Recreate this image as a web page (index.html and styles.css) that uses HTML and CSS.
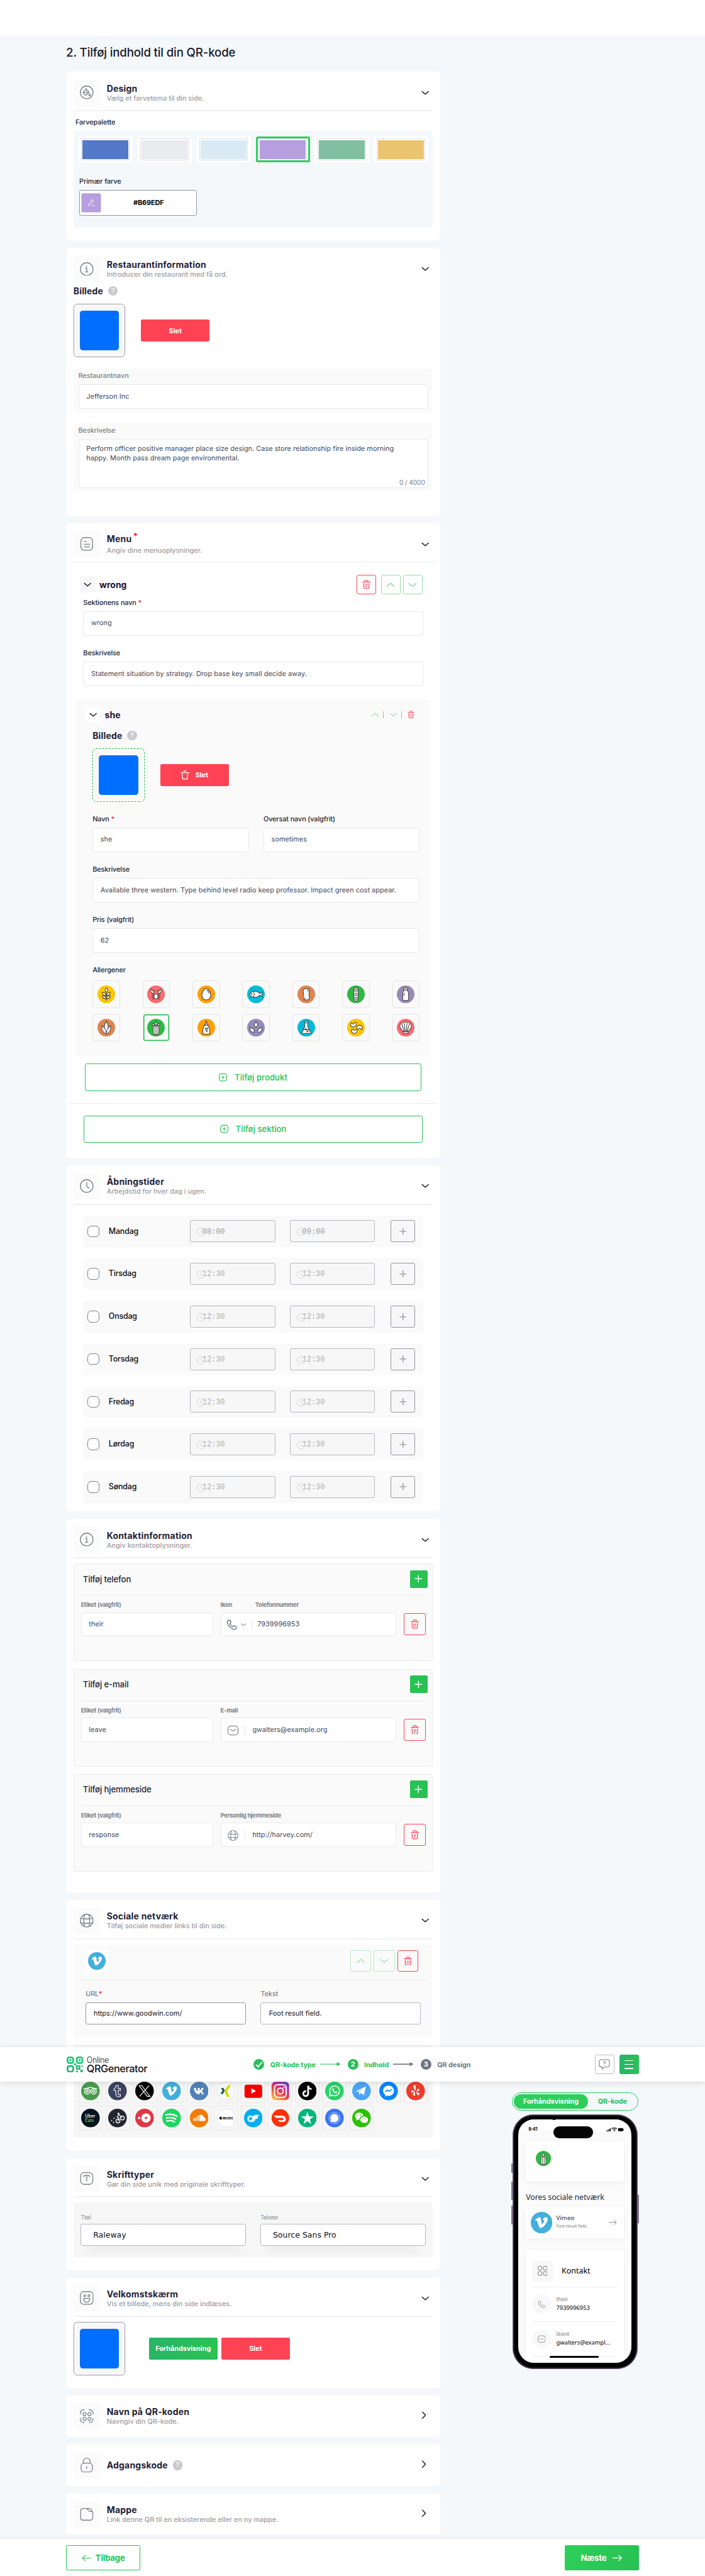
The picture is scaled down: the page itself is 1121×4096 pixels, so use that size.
FILE: index.html
```html
<!DOCTYPE html>
<html lang="da">
<head>
<meta charset="utf-8">
<title>Online QR Generator</title>
<link rel="stylesheet" href="styles.css">
</head>
<body>
<svg class="sprite" aria-hidden="true">
  <symbol id="chev-down" viewBox="0 0 16 8"><path d="M1 1l7 6 7-6"/></symbol>
  <symbol id="chev-up" viewBox="0 0 16 8"><path d="M1 7l7-6 7 6"/></symbol>
  <symbol id="chev-right" viewBox="0 0 10 16"><path d="M1.500 1l7 7-7 7"/></symbol>
  <symbol id="plus" viewBox="0 0 16 16"><path d="M8 .5v15M.5 8h15"/></symbol>
  <symbol id="trash" viewBox="0 0 18 20"><path d="M1 5h16M5.500 4.500c0-4 1-3.500 3.500-3.500s3.500-.500 3.500 3.500M3 8l.6 8.500c.2 2 .8 2.500 2.400 2.500h6c1.600 0 2.200-.5 2.400-2.500L15 8M6.500 10.500h5M7.500 14.500h3"/></symbol>
  <symbol id="bin" viewBox="0 0 18 20"><path d="M0 5h18M6 1h6M3 6l1 12.500h10L15 6"/></symbol>
  <symbol id="i-info" viewBox="0 0 28 28"><circle cx="14" cy="14" r="13"/><path d="M11.500 12H14v7.500M11.500 19.700h5M13.800 8v1.600"/></symbol>
  <symbol id="i-clock" viewBox="0 0 28 28"><circle cx="14" cy="14" r="13"/><path d="M14 7v8l5 3.500"/></symbol>
  <symbol id="i-globe" viewBox="0 0 28 28"><circle cx="14" cy="14" r="13"/><path d="M9.500 2c-2 8-2 16 0 24M18.500 2c2 8 2 16 0 24M2 9.500c8 1.500 16 1.500 24 0M2 18.500c8 1.500 16 1.500 24 0"/></symbol>
  <symbol id="i-paint" viewBox="0 0 28 28"><circle cx="14" cy="14" r="13"/><path d="M12.500 7l6 6.500-5 5.500c-1 1-2 1-3 0l-3-3c-1-1-1-2 0-3l5-5.500zM12.500 5.500V9M7 14h11.500M20 16.500c-2 3-1.700 4.500 0 4.500s2-1.500 0-4.500z"/></symbol>
  <symbol id="i-doc" viewBox="0 0 28 28"><rect x="2" y="1" width="24" height="26" rx="7"/><path d="M9 8.500h4M9 14.500h11M9 20h11"/></symbol>
  <symbol id="i-type" viewBox="0 0 28 28"><rect x="1.500" y="2" width="25" height="24" rx="7"/><path d="M8 10.500c0-2 .5-2.500 2.500-2.500h7c2 0 2.500.5 2.500 2.500M14 8v11.500"/></symbol>
  <symbol id="i-smile" viewBox="0 0 28 28"><rect x="1" y="1" width="26" height="26" rx="7"/><circle cx="10" cy="9.500" r="2"/><circle cx="18.500" cy="9.500" r="2"/><path d="M8 15h12c1 0 0 8-6 8s-7-8-6-8z"/></symbol>
  <symbol id="i-qr" viewBox="0 0 28 28"><path d="M1 9.500C1 3 3 1 9 1M19 1c6 0 8 2 8 8.500M1 18.500C1 25 3 27 9 27M19 27c6 0 8-2 8-8.500"/><rect x="6.500" y="6.500" width="6" height="6" rx="1.500"/><rect x="16.500" y="6.500" width="6" height="6" rx="1.500"/><rect x="6.500" y="16.500" width="6" height="6" rx="1.500"/><rect x="16.500" y="16.500" width="6" height="6" rx="1.500"/></symbol>
  <symbol id="i-lock" viewBox="0 0 28 30"><rect x="2.500" y="11" width="23" height="18" rx="6"/><path d="M7 11V8c0-9.500 14-9.500 14 0v3M14 18v4"/></symbol>
  <symbol id="i-folder" viewBox="0 0 28 28"><path d="M1.500 8c0-4.500 1.500-6 5.500-6h7l4 4.500c1 1 1.500 1.500 3 1.500h3c2 .5 2.500 2 2.500 4v8c0 4.500-1.500 6-5.500 6H7c-4 0-5.500-1.500-5.500-6zM12 2h7c4 0 5.500 1 5.800 6"/></symbol>
  <symbol id="i-phone" viewBox="0 0 24 24"><path d="M2 5c0 8 9 17 17 17 2 0 4-3 3.500-4.500-.8-1.500-3.500-3.500-5-3.300-1.500.3-2 2-3.300 1.800C12 15.500 8.500 12 8 10c-.2-1.400 1.500-2 1.800-3.300C10 5 8 2.300 6.500 1.500 5 1 2 3 2 5z"/></symbol>
  <symbol id="i-mail" viewBox="0 0 24 22"><rect x="1" y="1" width="22" height="20" rx="6"/><path d="M6 8c3 2.500 4.500 4 6 4s3-1.500 6-4"/></symbol>
  <symbol id="addbox" viewBox="0 0 18 18"><rect x="1" y="1" width="16" height="16" rx="5"/><path d="M9 5.500v7M5.500 9h7"/></symbol>
  <symbol id="arrow-r" viewBox="0 0 20 14"><path d="M0 7h18M12 1l6.500 6-6.500 6"/></symbol>
  <symbol id="arrow-l" viewBox="0 0 20 14"><path d="M20 7H2M8 1L1.500 7 8 13"/></symbol>
  <symbol id="vimeo" viewBox="0 0 36 36"><circle cx="18" cy="18" r="18" fill="#43afdc"/><path fill="#fff" d="M7 13.500l1.200 1.500c1.200-.8 2-.9 2.600.8.900 2.700 1.500 5.500 2.500 8.200.9 2.300 2.200 4 5 2.600 3.500-1.800 9.800-9 10-14.300.2-3.300-3.600-4.200-6-2.300-1.300 1-2.200 2.400-2.500 4 2.300-1 3.400.3 2.400 2.400-.6 1.300-1.600 3-2.400 3.600-1.100.8-1.600-1-1.800-2-.5-2.300-.7-4.600-1.300-6.800-.6-2.200-2-2.800-4-1.800-2 1-3.700 2.700-5.700 4.100z"/></symbol>
  <symbol id="celery" viewBox="0 0 36 36"><circle cx="18" cy="18" r="18" fill="#2fb843"/><g class="al"><path d="M14.500 15c-2.500-.5-4.500-3-4.500-5.500 3 0 5 1.500 5.500 5zM21.500 15c2.500-.5 4.500-3 4.500-5.500-3 0-5 1.500-5.500 5z"/><path d="M18 5c3 3.500 2.500 6.500 0 9.500-2.500-3-3-6 0-9.500z"/><path d="M13 32c-1.500-6-1.500-11 0-17.500 1.500-1 2.500-.5 3.300 0h3.400c.8-.5 2-1 3.300 0 1.500 6.500 1.500 11.500 0 17.500z"/><path d="M16 15v17M20 15v17"/></g></symbol>
</svg>

<div class="page">
  <div class="topbar"></div>
  <main class="main">
    <div class="column">
      <h1 class="title">2. Tilføj indhold til din QR-kode</h1>

      <section class="card card-design">
        <div class="head">
          <span class="head-icon"><svg class="ico"><use href="#i-paint"/></svg></span>
          <div class="head-text"><h2>Design</h2><p>Vælg et farvetema til din side.</p></div>
          <svg class="chev"><use href="#chev-down"/></svg>
        </div>
        <div class="rule"></div>
        <div class="label palette-label">Farvepalette</div>
        <div class="palette">
          <div class="swatches">
            <div class="swatch"><i class="c-blue"></i></div>
            <div class="swatch"><i class="c-gray"></i></div>
            <div class="swatch"><i class="c-sky"></i></div>
            <div class="swatch selected"><i class="c-purple"></i></div>
            <div class="swatch"><i class="c-green"></i></div>
            <div class="swatch"><i class="c-amber"></i></div>
          </div>
          <div class="label">Primær farve</div>
          <div class="hex"><span class="chip"><svg viewBox="0 0 16 16"><path d="M2 11.500L9 2.500c1.500-1.800 4.500.2 3 2.300L5.500 13.500 1.800 15zM8 4l3 2.500M9 15h6.500"/></svg></span><b>#B69EDF</b></div>
        </div>
      </section>

      <section class="card card-info">
        <div class="head bare">
          <span class="head-icon"><svg class="ico"><use href="#i-info"/></svg></span>
          <div class="head-text"><h2>Restaurantinformation</h2><p>Introducer din restaurant med få ord.</p></div>
          <svg class="chev"><use href="#chev-down"/></svg>
        </div>
        <div class="body">
          <div class="image-title">Billede <span class="help">?</span></div>
          <div class="image-row"><div class="image-box"><i></i></div><button class="btn red">Slet</button></div>
          <div class="panel"><div class="label muted">Restaurantnavn</div><div class="input">Jefferson Inc</div></div>
          <div class="panel"><div class="label muted">Beskrivelse</div><div class="input area"><p>Perform officer positive manager place size design. Case store relationship fire inside morning<br>happy. Month pass dream page environmental.</p><span class="count">0 / 4000</span></div></div>
        </div>
      </section>

      <section class="card card-menu">
        <div class="head spaced">
          <span class="head-icon"><svg class="ico"><use href="#i-doc"/></svg></span>
          <div class="head-text"><h2>Menu<span class="star">*</span></h2><p>Angiv dine menuoplysninger.</p></div>
          <svg class="chev"><use href="#chev-down"/></svg>
        </div>
        <div class="rule thin"></div>
        <div class="section">
          <div class="section-head">
            <span class="toggle"><svg class="chev"><use href="#chev-down"/></svg></span><strong>wrong</strong>
            <span class="sq danger"><svg class="t-ico"><use href="#trash"/></svg></span>
            <span class="sq ok"><svg class="chev"><use href="#chev-up"/></svg></span>
            <span class="sq ok last"><svg class="chev"><use href="#chev-down"/></svg></span>
          </div>
          <div class="field"><div class="label">Sektionens navn <em>*</em></div><div class="input">wrong</div></div>
          <div class="field"><div class="label">Beskrivelse</div><div class="input">Statement situation by strategy. Drop base key small decide away.</div></div>
        </div>
        <div class="product">
          <div class="product-head">
            <span class="toggle"><svg class="chev"><use href="#chev-down"/></svg></span><strong>she</strong>
            <svg class="chev pale"><use href="#chev-up"/></svg><i class="sep"></i><svg class="chev pale"><use href="#chev-down"/></svg><i class="sep"></i><svg class="t-ico"><use href="#trash"/></svg>
          </div>
          <div class="image-title">Billede <span class="help">?</span></div>
          <div class="image-row"><div class="image-box dashed"><i></i></div><button class="btn red"><svg><use href="#bin"/></svg>Slet</button></div>
          <div class="two">
            <div class="field"><div class="label">Navn <em>*</em></div><div class="input">she</div></div>
            <div class="field"><div class="label">Oversat navn (valgfrit)</div><div class="input">sometimes</div></div>
          </div>
          <div class="field"><div class="label">Beskrivelse</div><div class="input">Available three western. Type behind level radio keep professor. Impact green cost appear.</div></div>
          <div class="field"><div class="label">Pris (valgfrit)</div><div class="input">62</div></div>
          <div class="label al-label">Allergener</div>
          <div class="allergens">
            <div><svg viewBox="0 0 36 36"><circle cx="18" cy="18" r="18" fill="#fdc500"/><g class="al"><path d="M18 31V15"/><path d="M18 5c3.500 3 3.500 6 0 9-3.500-3-3.500-6 0-9zM18 20c-1-4-4-6-8-6 0 4 3 6.500 8 6zM18 20c1-4 4-6 8-6 0 4-3 6.500-8 6zM18 27c-1-4-4-6-8-6 0 4 3 6.500 8 6zM18 27c1-4 4-6 8-6 0 4-3 6.500-8 6z"/></g></svg></div>
            <div><svg viewBox="0 0 36 36"><circle cx="18" cy="18" r="18" fill="#fd6a6e"/><g class="al"><path class="nf" d="M10 15c1.500 2.500 3 3 5 4M26 15c-1.500 2.500-3 3-5 4M14 21l-5-.5M14 23l-5 1.500M15 25l-4 3.500M22 21l5-.5M22 23l5 1.500M21 25l4 3.500"/><path d="M9 7c-3 3-2 7 2 9 4-1 5-4 3-6l-2 2zM27 7c3 3 2 7-2 9-4-1-5-4-3-6l2 2z"/><path d="M14 20c1-3 7-3 8 0 .5 4-1 7-4 8-3-1-4.500-4-4-8z"/></g></svg></div>
            <div><svg viewBox="0 0 36 36"><circle cx="18" cy="18" r="18" fill="#ff9f05"/><g class="al"><path d="M18 6c5 0 9 8 9 14s-4 9.500-9 9.500S9 26 9 20 13 6 18 6z"/><path class="nf" d="M19 9c2 1 4 4 4.500 7"/></g></svg></div>
            <div><svg viewBox="0 0 36 36"><circle cx="18" cy="18" r="18" fill="#04bbd6"/><g class="al"><path d="M5 18c4-8 15-8 21-1.500l4.500-3.500v10L26 19.500C20 26 9 26 5 18z"/><path class="nf" d="M13 12.500c2 4 2 7 0 11"/><circle cx="9.500" cy="17.500" r=".8"/></g></svg></div>
            <div><svg viewBox="0 0 36 36"><circle cx="18" cy="18" r="18" fill="#df8450"/><g class="al"><path d="M18 6c5 0 8 4 6 8.500-1 2.500-1 4 0 6.500 2 5-1 9-6 9s-8-4-6-9c1-2.500 1-4 0-6.500C10 10 13 6 18 6z"/><path class="nf" d="M19 9c2 .5 3 2 3 3.500M14 24c0 1.500 1 3 3 3.500"/></g></svg></div>
            <div><svg viewBox="0 0 36 36"><circle cx="18" cy="18" r="18" fill="#2fb843"/><g class="al"><path d="M18 4c4 0 5.500 3.500 4 8 1.500 3.500 1.500 7 0 11 1.500 5-.5 9-4 9s-5.500-4-4-9c-1.500-4-1.500-7.500 0-11-1.500-4.500 0-8 4-8z"/><circle cx="18" cy="9.500" r="2.500"/><circle cx="18" cy="18" r="2.500"/><circle cx="18" cy="26.500" r="2.500"/></g></svg></div>
            <div><svg viewBox="0 0 36 36"><circle cx="18" cy="18" r="18" fill="#958bb9"/><g class="al"><path d="M14.500 9c-.5 4-2.500 4-2.500 7v12c0 1.500.5 2.500 2 2.500h8c1.500 0 2-1 2-2.500V16c0-3-2-3-2.500-7z"/><path d="M14 5h8v4h-8z"/><path class="nf" d="M15 15v6"/></g></svg></div>
            <div><svg viewBox="0 0 36 36"><circle cx="18" cy="18" r="18" fill="#df8450"/><g class="al"><path d="M18 5c5 7 5 16 0 24-5-8-5-17 0-24z"/><path d="M9 14c-1 7 2 14 9 17 0-8-3-13-9-17zM27 14c1 7-2 14-9 17 0-8 3-13 9-17z"/></g></svg></div>
            <div class="picked"><svg><use href="#celery"/></svg></div>
            <div><svg viewBox="0 0 36 36"><circle cx="18" cy="18" r="18" fill="#ff9f05"/><g class="al"><path d="M17 9c0-3 .3-4.500 1-4.500S19 6 19 9l3 4h-8zM14 13h8c0 5 4 6 3 12-1 2 .5 3 .5 6h-15c0-3 1.500-4 .5-6-1-6 3-7 3-12z"/><circle cx="17" cy="20.500" r="1.200"/><circle cx="20.500" cy="19.500" r="1"/><circle cx="19" cy="24.500" r="1.500"/></g></svg></div>
            <div><svg viewBox="0 0 36 36"><circle cx="18" cy="18" r="18" fill="#958bb9"/><g class="al"><path d="M18 6c4.500 5 4.500 9 0 11-4.500-2-4.500-6 0-11zM5.500 18c6.500.5 10 4 9 9-6 1-9.500-2-9-9zM30.500 18c-6.500.5-10 4-9 9 6 1 9.500-2 9-9z"/></g></svg></div>
            <div><svg viewBox="0 0 36 36"><circle cx="18" cy="18" r="18" fill="#04bbd6"/><g class="al"><path d="M15 8v8L9 28c-.5 1.500 0 2 1 2h16c1 0 1.500-.5 1-2l-6-12V8z"/><path d="M14 5h8v3h-8zM11.500 22h13"/><circle cx="17" cy="21.500" r="1.200"/><circle cx="20.500" cy="25.500" r="1.500"/></g></svg></div>
            <div><svg viewBox="0 0 36 36"><circle cx="18" cy="18" r="18" fill="#fdc500"/><g class="al"><path d="M8 8c-3 6 1 9 5 8.500 5-1 7-5 5-9.500-3-.5-3 1-4 3-2 2-4-2-6-2zM30 22c3-5-1-9-5-9-4 .5-7 5-4 8 2 1 3-.5 4-1.500 2-1 3 2.500 5 2.500zM10 21c-3 5 1 9 5 9 4-.5 7-5 5-8-2-1-3 .5-4 1.500-2 1-4-2.500-6-2.500z"/></g></svg></div>
            <div><svg viewBox="0 0 36 36"><circle cx="18" cy="18" r="18" fill="#fd6a6e"/><g class="al"><path d="M14 26c-4-3-8-8-8-12 3-10 21-10 24 0 0 4-4 9-8 12z"/><path class="nf" d="M15.500 26L10 10M17 26l-2-18M19 26l2-18M20.500 26L26 10"/><path d="M13 26h10v3.500H13z"/></g></svg></div>
          </div>
        </div>
        <div class="add product-add"><svg><use href="#addbox"/></svg>Tilføj produkt</div>
        <div class="rule thin"></div>
        <div class="add section-add"><svg><use href="#addbox"/></svg>Tilføj sektion</div>
      </section>

      <section class="card card-hours">
        <div class="head">
          <span class="head-icon"><svg class="ico"><use href="#i-clock"/></svg></span>
          <div class="head-text"><h2>Åbningstider</h2><p>Arbejdstid for hver dag i ugen.</p></div>
          <svg class="chev"><use href="#chev-down"/></svg>
        </div>
        <div class="rule"></div>
        <div class="days">
          <div class="day"><i class="check"></i><span>Mandag</span><div class="time set"><svg><use href="#i-clock"/></svg><i></i>08:00</div><div class="time set"><svg><use href="#i-clock"/></svg><i></i>09:00</div><b class="more"><svg><use href="#plus"/></svg></b></div>
          <div class="day"><i class="check"></i><span>Tirsdag</span><div class="time"><svg><use href="#i-clock"/></svg><i></i>12:30</div><div class="time"><svg><use href="#i-clock"/></svg><i></i>12:30</div><b class="more"><svg><use href="#plus"/></svg></b></div>
          <div class="day"><i class="check"></i><span>Onsdag</span><div class="time"><svg><use href="#i-clock"/></svg><i></i>12:30</div><div class="time"><svg><use href="#i-clock"/></svg><i></i>12:30</div><b class="more"><svg><use href="#plus"/></svg></b></div>
          <div class="day"><i class="check"></i><span>Torsdag</span><div class="time"><svg><use href="#i-clock"/></svg><i></i>12:30</div><div class="time"><svg><use href="#i-clock"/></svg><i></i>12:30</div><b class="more"><svg><use href="#plus"/></svg></b></div>
          <div class="day"><i class="check"></i><span>Fredag</span><div class="time"><svg><use href="#i-clock"/></svg><i></i>12:30</div><div class="time"><svg><use href="#i-clock"/></svg><i></i>12:30</div><b class="more"><svg><use href="#plus"/></svg></b></div>
          <div class="day"><i class="check"></i><span>Lørdag</span><div class="time"><svg><use href="#i-clock"/></svg><i></i>12:30</div><div class="time"><svg><use href="#i-clock"/></svg><i></i>12:30</div><b class="more"><svg><use href="#plus"/></svg></b></div>
          <div class="day"><i class="check"></i><span>Søndag</span><div class="time"><svg><use href="#i-clock"/></svg><i></i>12:30</div><div class="time"><svg><use href="#i-clock"/></svg><i></i>12:30</div><b class="more"><svg><use href="#plus"/></svg></b></div>
        </div>
      </section>

      <section class="card card-contact">
        <div class="head">
          <span class="head-icon"><svg class="ico"><use href="#i-info"/></svg></span>
          <div class="head-text"><h2>Kontaktinformation</h2><p>Angiv kontaktoplysninger.</p></div>
          <svg class="chev"><use href="#chev-down"/></svg>
        </div>
        <div class="rule"></div>
        <div class="contacts">
          <div class="contact">
            <div class="contact-head"><h3>Tilføj telefon</h3><b class="green-plus"><svg><use href="#plus"/></svg></b></div>
            <div class="contact-grid">
              <div><small>Etiket (valgfrit)</small><div class="input">their</div></div>
              <div><small><span class="icon-label">Ikon</span>Telefonnummer</small><div class="input combo phone-combo"><svg class="lead"><use href="#i-phone"/></svg><svg class="mini"><use href="#chev-down"/></svg><i></i>7939996953</div></div>
              <span class="sq danger big"><svg class="t-ico"><use href="#trash"/></svg></span>
            </div>
          </div>
          <div class="contact">
            <div class="contact-head"><h3>Tilføj e-mail</h3><b class="green-plus"><svg><use href="#plus"/></svg></b></div>
            <div class="contact-grid">
              <div><small>Etiket (valgfrit)</small><div class="input">leave</div></div>
              <div><small>E-mail</small><div class="input combo"><svg class="lead"><use href="#i-mail"/></svg><i></i>gwalters@example.org</div></div>
              <span class="sq danger big"><svg class="t-ico"><use href="#trash"/></svg></span>
            </div>
          </div>
          <div class="contact">
            <div class="contact-head"><h3>Tilføj hjemmeside</h3><b class="green-plus"><svg><use href="#plus"/></svg></b></div>
            <div class="contact-grid">
              <div><small>Etiket (valgfrit)</small><div class="input">response</div></div>
              <div><small>Personlig hjemmeside</small><div class="input combo"><svg class="lead"><use href="#i-globe"/></svg><i></i>http://harvey.com/</div></div>
              <span class="sq danger big"><svg class="t-ico"><use href="#trash"/></svg></span>
            </div>
          </div>
        </div>
      </section>

      <section class="card card-social">
        <div class="head">
          <span class="head-icon"><svg class="ico"><use href="#i-globe"/></svg></span>
          <div class="head-text"><h2>Sociale netværk</h2><p>Tilføj sociale medier links til din side.</p></div>
          <svg class="chev"><use href="#chev-down"/></svg>
        </div>
        <div class="rule"></div>
        <div class="network">
          <div class="network-head">
            <span class="network-logo"><svg><use href="#vimeo"/></svg></span>
            <span class="sq ok faint"><svg class="chev"><use href="#chev-up"/></svg></span>
            <span class="sq ok faint"><svg class="chev"><use href="#chev-down"/></svg></span>
            <span class="sq danger"><svg class="t-ico"><use href="#trash"/></svg></span>
          </div>
          <div class="two network-fields">
            <div><div class="label muted">URL<em>*</em></div><div class="input dark strong">https://www.goodwin.com/</div></div>
            <div><div class="label muted">Tekst</div><div class="input dark">Foot result field.</div></div>
          </div>
        </div>
        <div class="brands">
          <div><svg viewBox="0 0 38 38"><circle cx="19" cy="19" r="19" fill="#479c4b"/><g fill="none" stroke="#fff" stroke-width="1.800"><circle cx="12.500" cy="20" r="5.500"/><circle cx="25.500" cy="20" r="5.500"/><circle cx="12.500" cy="20" r="2"/><circle cx="25.500" cy="20" r="2"/><path d="M5 14h6c4-3 12-3 16 0h6"/></g></svg></div>
          <div><svg viewBox="0 0 38 38"><circle cx="19" cy="19" r="19" fill="#3b4260"/><path fill="none" stroke="#fff" stroke-width="1.400" d="M16 8h4.500v6H25v4h-4.500v7c0 2 2 2 4.500 1v4c-5 2-9.500 0-9.500-4.500V18H12v-3.500c3-1 3.700-3 4-6.500z"/></svg></div>
          <div><svg viewBox="0 0 38 38"><circle cx="19" cy="19" r="19" fill="#000"/><g fill="none" stroke="#fff" stroke-width="1.500"><path d="M8 8h5.500L30 30h-5.500zM28.500 8L9 30"/></g></svg></div>
          <div><svg><use href="#vimeo"/></svg></div>
          <div><svg viewBox="0 0 38 38"><circle cx="19" cy="19" r="19" fill="#5281b8"/><path fill="#fff" d="M8 13h4c1 4 2 6 4 7v-7h4v5c2-.5 3-3 4-5h4c-1 3-2 4.500-4 6.500 2 1.500 4 4 4.500 6.500H25c-1-2-2-4-5-4.500V26C13 26 9 21 8 13z"/></svg></div>
          <div><svg viewBox="0 0 38 38"><circle cx="19" cy="19" r="18.500" fill="#f9f9f9" stroke="#ddd"/><path fill="#0b5457" d="M8 13h5l3 5-4 7H7l4.500-7z"/><path fill="#d0d800" d="M23 7h5.500L20.500 19l5 12H20l-5-12z"/></svg></div>
          <div><svg viewBox="0 0 38 38"><rect x="1" y="6" width="36" height="27" rx="5" fill="#f60000"/><path fill="#fff" d="M15 13.500v11l9.500-5.500z"/></svg></div>
          <div><svg viewBox="0 0 38 38"><defs><linearGradient id="ig" x1="0.200" y1="1" x2="0.800" y2="0"><stop offset="0" stop-color="#fec053"/><stop offset=".4" stop-color="#f2453f"/><stop offset=".7" stop-color="#c62f9b"/><stop offset="1" stop-color="#6a45d0"/></linearGradient></defs><rect x="1" y="0" width="36" height="38" rx="8" fill="url(#ig)"/><g fill="none" stroke="#fff" stroke-width="2.500"><rect x="7" y="6" width="24" height="26" rx="7"/><circle cx="19" cy="19" r="6"/></g><circle cx="26" cy="12" r="1.600" fill="#fff"/></svg></div>
          <div><svg viewBox="0 0 38 38"><circle cx="19" cy="19" r="19" fill="#000"/><path fill="none" stroke="#fff" stroke-width="3.600" d="M20.500 8v16.500a5 5 0 1 1-4-5M20.500 9c1 4 3.500 6 7 6"/></svg></div>
          <div><svg viewBox="0 0 38 38"><circle cx="19" cy="19" r="19" fill="#27d366"/><path fill="none" stroke="#fff" stroke-width="2" d="M9 29l1.500-5.500a10 10 0 1 1 4 4z"/><path fill="#fff" d="M15 14c2-1.500 2.500 0 3 2 0 1-1 1-.8 2 1 1.500 2 2.500 3.500 3 1 0 1-1.200 2-1 2 .8 3 1.200 1.500 2.800C20.500 25.500 13 19 15 14z"/></svg></div>
          <div><svg viewBox="0 0 38 38"><circle cx="19" cy="19" r="19" fill="#4ea4f4"/><path fill="#fff" d="M7 20l21-10.500-4 18-6.500-4.500-3 3.500-1-5.500 9-7-11 6.500z"/></svg></div>
          <div><svg viewBox="0 0 38 38"><circle cx="19" cy="19" r="19" fill="#0a84ff"/><path fill="#fff" d="M19 8c7 0 11 5 11 10.500S26 29 19 29l-2.500-.5-4 2v-4C9.500 24.500 8 22 8 18.500 8 13 12 8 19 8z"/><path fill="none" stroke="#0a84ff" stroke-width="2" d="M12 21l5-4 3.500 3 5-4"/></svg></div>
          <div><svg viewBox="0 0 38 38"><circle cx="19" cy="19" r="19" fill="#ee3c2c"/><path fill="#fff" d="M14 8.500l4-1.500c1 0 1 0 1 1v9c-.5 1.500-1.500 1-2 0zM11.500 17l5 2.500c1 .5.500 1.500-.5 1.800L11 22.500c-1-.5-.5-5 .5-5.500zM18 22v6c0 1-.8 1-1.500.7l-3-1.700c-.5-.5-.3-1 0-1.500l3-4c.8-.8 1.500-.5 1.500.5zM21.500 21.500l5.500 2c.5 2-2 4.500-3 4.500l-3.500-5c-.3-1 .2-1.600 1-1.500zM21 18.500l3-4.500c1.500 0 3 3 2.500 4.500l-5 1.500c-.8 0-1-.8-.5-1.500z"/></svg></div>
          <div><svg viewBox="0 0 38 38"><circle cx="19" cy="19" r="19" fill="#06141f"/><text class="br-text" x="8" y="18" fill="#fff">Uber</text><text class="br-text" x="8" y="27" fill="#7cc043">Eats</text></svg></div>
          <div><svg viewBox="0 0 38 38"><circle cx="19" cy="19" r="19" fill="#22252f"/><g fill="none" stroke="#fff" stroke-width="1.600"><circle cx="20" cy="25" r="4"/><circle cx="29" cy="19" r="4"/><path d="M20 25l2-6-4-2 4-5 4 4 3 2"/></g><circle cx="21" cy="10" r="2" fill="#fff"/><g fill="#fff"><circle cx="7" cy="24" r="1.200"/><circle cx="12" cy="19.500" r="1.200"/><circle cx="11" cy="28" r="1.200"/></g></svg></div>
          <div><svg viewBox="0 0 38 38"><circle cx="19" cy="19" r="19" fill="#df3845"/><circle cx="22" cy="19" r="9.500" fill="#fff"/><circle cx="22" cy="19" r="2.500" fill="#df3845"/><circle cx="8" cy="19" r="2.500" fill="#fff"/></svg></div>
          <div><svg viewBox="0 0 38 38"><circle cx="19" cy="19" r="19" fill="#1ed760"/><g fill="none" stroke="#fff" stroke-width="3" stroke-linecap="round"><path d="M7.500 12.500c8-2 16-1 22.500 2.500M8.500 19c7-2 13-1 19 2M9.500 25c6-1.500 11-1 15.500 1.700"/></g></svg></div>
          <div><svg viewBox="0 0 38 38"><circle cx="19" cy="19" r="19" fill="#f47a00"/><path fill="#fff" d="M19 25V13c6-3 9 2 9.500 5 3-.5 5 3.500 2 7z"/><path stroke="#fff" stroke-width="1.400" d="M7 20v5M9.500 18v7M12 19v6M14.500 15v10M17 13.500V25"/></svg></div>
          <div><svg viewBox="0 0 38 38"><circle cx="19" cy="19" r="18.500" fill="#fff" stroke="#ddd"/><path fill="#000" d="M5 19c0-2 1.500-2.500 2.500-2 1-.5 2-.3 2.500.5-1 1-.8 2.500.3 3-.5 1.500-1.300 2-2.500 1.500C6 22.500 5 21 5 19zM7.500 16.500c0-1 .5-1.500 1.500-1.800 0 1-.5 1.700-1.500 1.800z"/><text class="br-music" x="11.500" y="21.800" fill="#000">MUSIC</text></svg></div>
          <div><svg viewBox="0 0 38 38"><circle cx="19" cy="19" r="19" fill="#06aeef"/><circle cx="13.500" cy="20.500" r="5" fill="none" stroke="#c9edfc" stroke-width="4"/><path fill="#fff" d="M16 20c2-5 4-7.500 9-7.500h6c-1 3-3 4-6 4.500 2 .5 3 .5 4.500.5-1.500 3-3.500 3.500-6 3.500-1 4-4 6.500-8 7 3-2.500 2.500-6 .5-8z"/></svg></div>
          <div><svg viewBox="0 0 38 38"><circle cx="19" cy="19" r="18" fill="#ff3008"/><path fill="#fff" d="M5 14h17c9 0 12 12 2 13h-7l-3-3.500h9c3 0 3-5 0-5H10z"/></svg></div>
          <div><svg viewBox="0 0 38 38"><circle cx="19" cy="19" r="19" fill="#04b67a"/><path fill="#fff" d="M19 6l3.200 9.800H32L24 22l3 9.500-8-6-8 6L14 22l-8-6.200h9.800z"/></svg></div>
          <div><svg viewBox="0 0 38 38"><circle cx="19" cy="19" r="19" fill="#3a76f0"/><circle cx="19" cy="19" r="11" fill="none" stroke="#fff" stroke-width="1.200" stroke-dasharray="3 1"/><path fill="#fff" d="M19 10.500a8.500 8.500 0 1 1-4 16l-4.500 1 1-4.500a8.500 8.500 0 0 1 7.500-12.500z"/></svg></div>
          <div><svg viewBox="0 0 38 38"><circle cx="19" cy="19" r="19" fill="#2dc100"/><path fill="#fff" d="M14 8c5 0 8.500 3 8.500 6.500-5 .5-8 4-7.500 8h-4l-3 1.500 1-3C3 15.500 7 8 14 8z"/><path fill="#fff" d="M24.500 16c5 0 8 3.200 8 6.500 0 2-1 3.700-3 5l.5 2.500-2.500-1.300c-6 1-11-1.700-11-6.200 0-3.300 3-6.500 8-6.500z"/><g fill="#2dc100"><circle cx="11.500" cy="13" r="1.200"/><circle cx="17" cy="13" r="1.200"/><circle cx="22" cy="21" r="1"/><circle cx="27" cy="21" r="1"/></g></svg></div>
        </div>
      </section>

      <section class="card card-fonts">
        <div class="head">
          <span class="head-icon"><svg class="ico"><use href="#i-type"/></svg></span>
          <div class="head-text"><h2>Skrifttyper</h2><p>Gør din side unik med originale skrifttyper.</p></div>
          <svg class="chev"><use href="#chev-down"/></svg>
        </div>
        <div class="rule"></div>
        <div class="two fonts">
          <div><small>Titel</small><div class="input select">Raleway</div></div>
          <div><small>Tekster</small><div class="input select">Source Sans Pro</div></div>
        </div>
      </section>

      <section class="card card-welcome">
        <div class="head">
          <span class="head-icon"><svg class="ico"><use href="#i-smile"/></svg></span>
          <div class="head-text"><h2>Velkomstskærm</h2><p>Vis et billede, mens din side indlæses.</p></div>
          <svg class="chev"><use href="#chev-down"/></svg>
        </div>
        <div class="rule"></div>
        <div class="image-row welcome"><div class="image-box"><i></i></div><button class="btn green">Forhåndsvisning</button><button class="btn red">Slet</button></div>
      </section>

      <section class="card">
        <div class="head">
          <span class="head-icon"><svg class="ico"><use href="#i-qr"/></svg></span>
          <div class="head-text"><h2>Navn på QR-koden</h2><p>Navngiv din QR-kode.</p></div>
          <svg class="chev-r"><use href="#chev-right"/></svg>
        </div>
      </section>
      <section class="card">
        <div class="head">
          <span class="head-icon"><svg class="ico lock"><use href="#i-lock"/></svg></span>
          <div class="head-text"><h2 class="with-help">Adgangskode <span class="help">?</span></h2></div>
          <svg class="chev-r"><use href="#chev-right"/></svg>
        </div>
      </section>
      <section class="card">
        <div class="head">
          <span class="head-icon"><svg class="ico"><use href="#i-folder"/></svg></span>
          <div class="head-text"><h2>Mappe</h2><p>Link denne QR til en eksisterende eller en ny mappe.</p></div>
          <svg class="chev-r"><use href="#chev-right"/></svg>
        </div>
      </section>
    </div>

    <aside class="preview">
      <div class="pill"><b class="on">Forhåndsvisning</b><b>QR-kode</b></div>
      <div class="phone">
        <i class="key k1"></i><i class="key k2"></i><i class="key k3"></i><i class="key k4"></i>
        <div class="screen">
          <span class="scrolled">g</span>
          <div class="status"><span>9:41</span><i class="island"></i><svg viewBox="0 0 36 8"><path d="M0 6h1.700v2H0zM2.500 4.500h1.700V8H2.500zM5 3h1.700v5H5zM7.500 1h1.700v7H7.500zM16.500 8l-2-2.200c1.200-1 2.800-1 4 0zM13.200 4.600l-1-1.100c2.600-2.300 6-2.300 8.600 0l-1 1.100c-2-1.700-4.600-1.700-6.600 0zM11.500 2.700l-.8-.9c3.400-3 8.200-3 11.600 0l-.8.900c-3-2.500-7-2.500-10 0z"/><rect x="24" y="1" width="10.500" height="6.500" rx="2"/><rect x="35" y="3" width="1" height="2.500"/></svg></div>
          <div class="p-card p-allergen"><svg><use href="#celery"/></svg></div>
          <h4>Vores sociale netværk</h4>
          <div class="p-card p-vimeo"><svg class="p-logo"><use href="#vimeo"/></svg><div><b>Vimeo</b><span>Foot result field.</span></div><svg class="p-arrow"><use href="#arrow-r"/></svg></div>
          <div class="p-card p-contact">
            <div class="p-head"><span><svg viewBox="0 0 20 20"><rect x=".7" y=".7" width="7.600" height="7.600" rx="2.500"/><rect x="11.700" y=".7" width="7.600" height="7.600" rx="2.500"/><rect x=".7" y="11.700" width="7.600" height="7.600" rx="2.500"/><rect x="11.700" y="11.700" width="7.600" height="7.600" rx="2.500"/></svg></span>Kontakt</div>
            <div class="p-row"><i><svg><use href="#i-phone"/></svg></i><div><small>their</small><b>7939996953</b></div></div>
            <div class="p-row"><i><svg><use href="#i-mail"/></svg></i><div><small>leave</small><b>gwalters@exampl...</b></div></div>
          </div>
          <i class="home"></i>
        </div>
      </div>
    </aside>
  </main>

  <footer class="footer">
    <a class="back"><svg><use href="#arrow-l"/></svg>Tilbage</a>
    <a class="next">Næste<svg><use href="#arrow-r"/></svg></a>
  </footer>

  <header class="header">
    <div class="logo">
      <svg viewBox="0 0 34 33"><g fill="none" stroke="#1cc878" stroke-width="3.600"><rect x="1.800" y="1.800" width="11.500" height="11.500" rx="3.500"/><rect x="20.700" y="1.800" width="11.500" height="11.500" rx="3.500"/><rect x="1.800" y="19.500" width="11.500" height="11.500" rx="3.500" stroke="#2bb673"/></g><g fill="#1fc478"><rect x="5.500" y="5.500" width="4" height="4"/><rect x="24.500" y="5.500" width="4" height="4"/><rect x="15" y="14" width="4.500" height="4"/><path fill="#2bb673" d="M19 18h9v9h-9zM30 18h3v3h-3zM19 29h4v3h-4zM28 27h5v5h-5z"/></g><rect x="22" y="21" width="3" height="3" fill="#fff"/></svg>
      <div class="brand"><span>Online</span><b>QRGenerator</b></div>
    </div>
    <div class="steps">
      <i class="dot"><svg viewBox="0 0 22 22"><path d="M5 11.500l4.500 4.500 8-10"/></svg></i><b>QR-kode type</b><svg class="link" viewBox="0 0 42 8"><path d="M0 4h36"/><path class="tip" d="M34 0l8 4-8 4z"/></svg>
      <i class="dot">2</i><b>Indhold</b><svg class="link dark" viewBox="0 0 42 8"><path d="M0 4h36"/><path class="tip" d="M34 0l8 4-8 4z"/></svg>
      <i class="dot gray">3</i><b class="gray">QR design</b>
    </div>
    <div class="actions">
      <span class="chat"><svg viewBox="0 0 24 22"><path d="M6 1h12c3.500 0 5 1.500 5 5v5c0 4-1.500 5.500-5 5.500h-6L7.500 21v-4.500C2.500 16.500 1 15 1 11V6c0-3.500 1.500-5 5-5z"/><path d="M9.800 7c0-3 4.600-2.500 4.400 0C14 9 12 8.500 12 10.500M12 12.500v1.300"/></svg></span>
      <span class="burger"><i></i><i></i><i></i></span>
    </div>
  </header>
</div>
</body>
</html>
```
FILE: styles.css
```css
* { box-sizing: border-box; }
html, body { margin: 0; background: #f4f8fb; }
body { font-family: Inter, "Open Sans", "Liberation Sans", sans-serif; color: #1f1f38; overflow-x: hidden; }
h1, h2, h3, h4, p { margin: 0; }
i, em { font-style: normal; }
svg { display: block; fill: none; stroke: none; flex: none; }
button { border: 0; font-family: inherit; margin: 0; padding: 0; }
.sprite { position: absolute; width: 0; height: 0; }

.page { zoom: .7787; position: relative; }
.topbar { height: 72px; background: #fff; }
.main { display: flex; justify-content: space-between; padding: 21px 135px 8px; height: 5112px; }
.column { width: 764px; display: flex; flex-direction: column; gap: 16px; }
.title { font-size: 24px; line-height: 30px; font-weight: 500; margin-bottom: 8px; letter-spacing: -.2px; color: #15182b; white-space: nowrap; }

.card { background: #fff; border-radius: 8px; flex: none; height: 84px; }
.card-design { height: 344px; }
.card-info { height: 546px; }
.card-menu { height: 1295px; }
.card-hours { height: 706px; }
.card-contact { height: 762px; }
.card-social { height: 511px; }
.card-fonts { height: 228px; }
.card-welcome { height: 225px; }

.head { display: flex; align-items: center; padding: 15px 23px 9px 15px; height: 78px; }
.head.bare { height: 69px; padding-bottom: 0; }
.head-icon { width: 54px; height: 54px; border-radius: 4px; background: #fbfbfb; display: flex; align-items: center; justify-content: center; }
.ico { width: 28px; height: 28px; stroke: #7b8189; stroke-width: 1.7; stroke-linecap: round; stroke-linejoin: round; }
.ico.lock { height: 30px; }
.head-text { flex: 1; margin-left: 14px; }
.head-text h2 { font-size: 18px; line-height: 22px; font-weight: 700; letter-spacing: .25px; }
.head-text p { font-size: 14px; line-height: 18px; font-weight: 500; color: #9c9ca6; letter-spacing: .02px; }
.spaced .head-text p { margin-top: 4px; }
.spaced .head-text { padding-bottom: 1px; }
.with-help { display: flex; align-items: center; }
.star { color: #f0142c; font-size: 18px; font-weight: 500; display: inline-block; transform: translate(3px, -5px); line-height: 10px; }
.chev { width: 16px; height: 9px; stroke: #1f1f38; stroke-width: 1.9; }
.chev-r { width: 10px; height: 16px; stroke: #1f1f38; stroke-width: 1.9; margin: 0 6px 4px 0; }
.rule { height: 2px; background: #f2f2f3; margin: 0 16px; }
.rule.thin { height: 1px; background: #e9e9eb; margin: 0 6px; }

.label { font-size: 14px; line-height: 20px; font-weight: 500; color: #20222f; letter-spacing: -.15px; margin-bottom: 7px; }
.label em { color: #f0142c; }
.label.muted { color: #7b8088; }
.input { height: 50px; border: 2px solid #e9e9eb; border-radius: 4px; background: #fff; display: flex; align-items: center; padding: 0 15px; font-size: 14px; line-height: 20px; color: #414759; letter-spacing: .05px; white-space: nowrap; }

.palette-label { margin: 13px 0 7px 19px; }
.palette { margin: 0 15px; height: 198px; background: #f4f8fb; border-radius: 4px; padding: 12px 10px; }
.swatches { display: flex; gap: 10px; margin-bottom: 29px; }
.swatch { flex: 1; height: 53px; background: #fff; border-radius: 4px; padding: 4px 6px; border: 0 solid #2dd05b; }
.swatch.selected { border-width: 4px; padding: 0 2px; }
.swatch i { display: block; height: 45px; border: 1px solid #dfdfe2; padding: 2px 1px; background-clip: content-box; }
.c-blue { background-color: #5379c9; }
.c-gray { background-color: #eaebef; }
.c-sky { background-color: #d9eaf5; }
.c-purple { background-color: #b69edf; }
.c-green { background-color: #80bf9f; }
.c-amber { background-color: #ecc471; }
.palette .label { margin-left: 2px; }
.hex { margin-left: 2px; width: 240px; height: 52px; border: 2px solid #96969f; border-radius: 4px; background: #fff; display: flex; align-items: center; padding-left: 3px; }
.chip { width: 40px; height: 40px; border-radius: 4px; background: #b69edf; display: flex; align-items: center; justify-content: center; border: 1px solid #d2cbe0; }
.chip svg { width: 16px; height: 15px; stroke: #fff; stroke-width: 1.2; }
.hex b { flex: 1; text-align: center; font-size: 14px; color: #000; letter-spacing: -.1px; }

.body { padding: 7px 15px 0; }
.image-title { display: flex; align-items: center; font-size: 18px; line-height: 22px; font-weight: 700; letter-spacing: .2px; }
.help { width: 20px; height: 20px; border-radius: 50%; background: #c9c9ce; color: #fff; font-size: 14px; line-height: 20px; font-weight: 500; text-align: center; margin-left: 10px; letter-spacing: 0; }
.image-row { display: flex; align-items: center; margin-top: 16px; height: 108px; }
.image-box { width: 106px; height: 108px; border: 2px solid #96969f; border-radius: 8px; padding: 2px; background: #f7f7f7 content-box; display: flex; align-items: center; justify-content: center; }
.image-box i { width: 80px; height: 80px; border-radius: 6px; background: #006fff; }
.image-box.dashed { border: 1px dashed #28c254; padding: 3px; background-color: #f7f7f7; box-shadow: inset 0 0 0 3px #fff; background-clip: border-box; }
.btn { width: 140px; height: 45px; border-radius: 3px; color: #fff; font-weight: 700; font-size: 14px; letter-spacing: -.1px; display: flex; align-items: center; justify-content: center; margin-left: 32px; }
.btn.red { background: #ff4355; }
.btn.green { background: linear-gradient(100deg, #27b568, #2bc253); }
.btn svg { width: 18px; height: 19px; stroke: #fff; stroke-width: 1.8; margin-right: 12px; }
.panel { margin-top: 24px; background: #fafafa; border-radius: 4px; padding: 5px 10px 6px; }
.input.area { height: 100px; flex-direction: column; justify-content: space-between; align-items: flex-start; padding: 8px 5px 2px 15px; }
.count { align-self: flex-end; color: #7b8088; font-size: 13px; line-height: 18px; letter-spacing: -.1px; }

.section { padding: 26px 35px 0; }
.section-head { display: flex; align-items: center; height: 40px; margin-bottom: 7px; }
.section-head .toggle { margin-left: -7px; }
.toggle { width: 32px; height: 32px; background: #f6f6f6; display: flex; align-items: center; justify-content: center; }
.section-head strong, .product-head strong { flex: 1; margin-left: 8px; font-size: 18px; line-height: 22px; color: #211430; letter-spacing: 0; }
.sq { width: 40px; height: 40px; border: 1px solid; border-radius: 4px; display: flex; align-items: center; justify-content: center; }
.sq.danger { border-color: #ff4355; }
.sq.ok { border-color: #93dca9; margin-left: 10px; }
.sq.ok.last { margin-left: 5px; margin-right: 1px; }
.sq.ok .chev { width: 18px; height: 10px; stroke: #93dca9; }
.t-ico { width: 17px; height: 19px; stroke: #ff4355; stroke-width: 1.7; stroke-linecap: round; }
.field + .field, .two + .field, .image-row + .two { margin-top: 26px; }
.product { margin: 29px 20px 0; height: 726px; background: #fafafa; border-radius: 5px; padding: 14px 22px 29px 34px; }
.product-head { display: flex; align-items: center; margin: 0 11px 15px -15px; height: 32px; }
.product-head .toggle { background: #fff; }
.product-head .pale { stroke: #93dca9; stroke-width: 1.5; }
.product-head .sep { width: 1.5px; height: 14px; background: #6fd48c; margin: 0 11px 0 9px; }
.product-head .t-ico { width: 14px; height: 16px; }
.two { display: grid; grid-template-columns: 1fr 1fr; gap: 30px; }
.two > .field + .field { margin-top: 0; }
.al-label { margin: 26px 0 11px; }
.allergens { display: grid; grid-template-columns: repeat(7, 56px); justify-content: space-between; row-gap: 12px; }
.allergens > div { height: 56px; border: 2px solid #e5e5df; border-radius: 5px; display: flex; align-items: center; justify-content: center; }
.allergens svg { width: 36px; height: 36px; }
.allergens .picked { box-shadow: inset 0 0 0 2px #28c254; }
.al { fill: #fff; stroke: #3b3b3b; stroke-width: 1.3; stroke-linejoin: round; }
.nf { fill: none; }
.add { height: 56px; border: 1px solid #28c254; border-radius: 4px; display: flex; align-items: center; justify-content: center; color: #28c254; font-weight: 500; font-size: 17px; letter-spacing: 0; }
.add svg { width: 17px; height: 18px; stroke: #28c254; stroke-width: 1.6; margin-right: 15px; }
.product-add { margin: 16px 39px 25px; }
.section-add { margin: 24px 36px 0; }

.days { padding: 22px 35px 0; display: flex; flex-direction: column; gap: 22px; }
.day { height: 65px; background: #fafafa; border-radius: 8px; display: flex; align-items: center; padding-left: 9px; }
.check { width: 24px; height: 24px; border: 2px solid #777d87; border-radius: 8px; background: #fff; }
.day > span { width: 166px; margin: 0 0 2px 19px; font-size: 16px; font-weight: 500; color: #0b0b12; letter-spacing: -.25px; }
.time { position: relative; width: 174px; height: 45px; border: 1px solid #b6b8bd; border-radius: 4px; background: #f7f7f7; padding: 2px 0 0 24px; display: flex; align-items: center; font-family: "Liberation Mono", monospace; font-size: 15.3px; color: #adadb0; margin-right: 30px; }
.time.set { color: #9a9a9e; }
.time svg { position: absolute; left: 13px; top: 14px; width: 17px; height: 17px; stroke: #d3d3d6; stroke-width: 2; }
.time i { position: absolute; left: 39px; top: 12px; width: 1px; height: 20px; background: #d9d9dc; }
.more { width: 51px; height: 45px; border: 1px solid #96969f; border-radius: 4px; background: #f7f7f7; display: flex; align-items: center; justify-content: center; margin-left: 1px; }
.more svg { width: 15px; height: 15px; stroke: #96969f; stroke-width: 1.9; }

.contacts { padding: 11px 15px 0; display: flex; flex-direction: column; gap: 16px; }
.contact { height: 199px; border: 1px solid #ebebed; border-radius: 4px; background: #fafafa; padding: 12px 14px; }
.contact-head { display: flex; justify-content: space-between; height: 52px; border-bottom: 1px solid #ebebed; margin: 0 2px 12px; padding-left: 2px; }
.contact-head h3 { font-size: 17px; line-height: 36px; font-weight: 500; letter-spacing: -.2px; }
.green-plus { width: 36px; height: 36px; border-radius: 3px; background: #28c254; margin-right: -6px; display: flex; align-items: center; justify-content: center; }
.green-plus svg { width: 16px; height: 16px; stroke: #fff; stroke-width: 1.8; }
.contact-grid { display: grid; grid-template-columns: 270px 359px 45px; gap: 15px; align-items: end; }
.contact-grid small { display: block; font-size: 12px; line-height: 16px; font-weight: 700; color: #7b8088; margin-bottom: 6px; letter-spacing: -.3px; white-space: nowrap; }
.icon-label { display: inline-block; width: 71px; }
.sq.big { width: 45px; height: 45px; margin-bottom: 3px; }
.combo .lead { width: 22px; height: 22px; stroke: #6c727c; stroke-width: 1.5; margin: 2px 13px 0 -2px; }
.combo i { width: 2px; height: 20px; background: #e5e5e8; margin: 2px 14px 0 0; }
.phone-combo .lead { margin: 2px 8px 0 -4px; stroke: #414759; }
.phone-combo .mini { width: 11px; height: 6px; stroke: #5c616b; stroke-width: 1.8; margin-right: 10px; }
.phone-combo i { margin-right: 10px; }

.network { margin: 11px 15px 0; height: 189px; background: #fafafa; border-radius: 4px; padding: 10px; }
.network-head { display: flex; align-items: center; height: 63px; padding: 0 20px 15px 15px; border-bottom: 2px solid #ececee; gap: 5px; }
.network-logo { width: 46px; height: 46px; background: #fff; border-radius: 3px; display: flex; align-items: center; justify-content: center; margin-right: auto; }
.network-logo svg { width: 36px; height: 36px; }
.network .sq { width: 43px; height: 43px; margin-left: 0; }
.sq.faint { border-color: #bce8c9; }
.sq.ok.faint .chev { stroke: #aee4be; }
.network-fields { padding: 18px 15px 0; }
.input.dark { height: 45px; border: 1px solid #b6b8bd; color: #0f0f18; padding: 0 16px; }
.input.dark.strong { border: 2px solid #96969f; padding: 0 15px; }
.brands { margin: 15px 15px 0; height: 190px; background: #f6f6f6; border-radius: 4px; padding: 70px 10px 15px; display: grid; grid-template-columns: repeat(13, 50px); justify-content: space-between; row-gap: 5px; }
.brands > div { height: 50px; border: 1px solid #e9e9ea; border-radius: 4px; display: flex; align-items: center; justify-content: center; }
.brands svg { width: 38px; height: 38px; }
.br-text { font: 500 9px Inter, sans-serif; }
.br-music { font: 700 6.6px Inter, sans-serif; }

.fonts { margin: 11px 15px 0; height: 111px; padding: 22px 15px 0; background: #f6f6f6; border-radius: 4px; }
.fonts small { display: block; font-size: 11px; line-height: 16px; color: #8a8f96; margin-bottom: 5px; letter-spacing: -.3px; }
.input.select { height: 45px; border: 1px solid #b6b8bd; padding: 0 24px; font: 16px "DejaVu Sans", sans-serif; color: #0f0f18; box-shadow: 0 28px 12px -12px rgba(0, 0, 0, .03); }
.welcome { margin: 11px 15px 0; }
.welcome .btn { margin-left: 48px; }
.welcome .btn.red { margin-left: 8px; }

.preview { width: 258px; align-self: flex-end; margin: 0 1px 338px 0; }
.pill { height: 38px; border: 2px solid #2dcf5b; border-radius: 19px; padding: 2px; display: flex; align-items: center; font-size: 14px; color: #28c254; }
.pill b { flex: 1; text-align: center; letter-spacing: -.1px; }
.pill .on { flex: none; width: 152px; line-height: 30px; background: #2dcf5b; color: #fff; border-radius: 15px; }
.phone { position: relative; width: 256px; height: 520px; margin: 8px 0 0 1px; border-radius: 42px; background: #000; border: 2px solid #6d6177; box-shadow: inset 0 0 0 2px #2d2636; padding: 8px 12px 11px 10px; }
.key { position: absolute; width: 3px; background: #83748f; left: -4px; }
.k1 { top: 98px; height: 19px; }
.k2 { top: 135px; height: 38px; }
.k3 { top: 185px; height: 38px; }
.k4 { top: 162px; height: 58px; left: auto; right: -4px; }
.screen { position: relative; height: 497px; border-radius: 32px; background: #fbfbfb; overflow: hidden; padding: 0 16px; font-family: "Noto Sans", sans-serif; }
.scrolled { position: absolute; z-index: 1; left: 69px; top: -17px; font-size: 16px; line-height: 20px; color: #15182b; }
.status { display: flex; align-items: center; justify-content: space-between; background: #fff; height: 25px; font: 700 9px Inter, sans-serif; color: #000; margin: 0 -16px 20px; padding: 16px 16px 0 21px; }
.status svg { width: 36px; height: 8px; fill: #000; }
.island { width: 81px; height: 24px; border-radius: 12px; background: #050505; margin: 6px 5px -6px 12px; }
.p-card { background: #fff; box-shadow: 0 4px 14px rgba(0, 0, 0, .05); }
.p-allergen { height: 81px; padding: 20px; }
.p-allergen svg { width: 31px; height: 31px; }
.screen h4 { font-size: 16px; line-height: 24px; font-weight: 400; color: #222c3f; margin: 22px 0 7px; white-space: nowrap; letter-spacing: -.15px; }
.p-vimeo { height: 64px; display: flex; align-items: center; padding: 0 13px 0 10px; }
.p-logo { width: 44px; height: 44px; margin-right: 8px; }
.p-vimeo div { flex: 1; }
.p-vimeo b, .p-vimeo span { display: block; font-weight: 400; white-space: nowrap; }
.p-vimeo b { font-size: 12.5px; line-height: 16px; }
.p-vimeo span { font-size: 8.6px; line-height: 16px; color: #7b8088; letter-spacing: -.1px; }
.p-arrow { width: 17px; height: 12px; stroke: #7b8189; stroke-width: 1.4; }
.p-contact { margin-top: 25px; height: 240px; padding: 20px 12px 0; }
.p-head { height: 55px; border-bottom: 1px solid #eeeeef; display: flex; font-size: 16px; line-height: 44px; color: #000; }
.p-head span { width: 44px; height: 44px; border-radius: 4px; background: #f8f8f8; display: flex; align-items: center; justify-content: center; margin-right: 17px; }
.p-head svg { width: 20px; height: 20px; stroke: #7b8189; stroke-width: 1.3; }
.p-row { height: 71px; border-bottom: 1px solid #eeeeef; display: flex; align-items: center; }
.p-row > i { width: 40px; height: 40px; border-radius: 50%; background: #f8f8f8; display: flex; align-items: center; justify-content: center; margin-right: 10px; }
.p-row svg { width: 16px; height: 16px; stroke: #7b8189; stroke-width: 1.6; }
.p-row small, .p-row b { display: block; font-size: 12px; line-height: 19px; font-weight: 400; color: #000; white-space: nowrap; }
.p-row small { font-size: 11px; color: #7b8088; line-height: 17px; }
.home { position: absolute; left: 65px; bottom: 10px; width: 100px; height: 4px; border-radius: 2px; background: #000; }

.footer { height: 76px; background: #fff; box-shadow: 0 0 10px rgba(0, 0, 0, .08); padding: 13px 135px 0; display: flex; justify-content: space-between; position: relative; }
.footer a { height: 52px; border-radius: 3px; display: flex; align-items: center; justify-content: center; font-weight: 700; font-size: 17px; letter-spacing: -.3px; }
.back { width: 152px; border: 1px solid #28c254; color: #28c254; }
.back svg { width: 19px; height: 14px; stroke: #28c254; stroke-width: 1.5; margin-right: 9px; }
.next { width: 152px; background: linear-gradient(125deg, #2dd05b, #28c052); color: #fff; }
.next svg { width: 20px; height: 14px; stroke: #fff; stroke-width: 1.6; margin-left: 13px; }

.header { position: absolute; left: 0; right: 0; top: 4180px; height: 71px; background: #fff; box-shadow: 0 2px 12px rgba(0, 0, 0, .14); padding: 0 135px; display: flex; align-items: center; justify-content: space-between; }
.logo { width: 383px; display: flex; align-items: center; padding-left: 1px; }
.logo svg { width: 34px; height: 33px; margin-right: 7px; }
.brand span, .brand b { display: block; line-height: 17px; color: #15151f; }
.brand span { font-size: 16px; font-weight: 300; letter-spacing: -.4px; }
.brand b { font-size: 21px; font-weight: 500; letter-spacing: -.6px; }
.steps { flex: 1; display: flex; align-items: center; font-size: 14px; color: #28c254; white-space: nowrap; }
.steps b { letter-spacing: -.15px; }
.dot { width: 22px; height: 22px; border-radius: 50%; background: #28bd5c; color: #fff; font-weight: 700; text-align: center; line-height: 22px; margin-right: 12px; }
.dot svg { stroke: #fff; stroke-width: 2.6; }
.dot.gray { background: #70767f; }
.steps .gray:not(.dot) { color: #777c84; }
.link { width: 42px; height: 8px; stroke: #28c254; stroke-width: 1.3; margin: 0 14px 0 9px; }
.tip { fill: #28c254; stroke: none; }
.link.dark { stroke: #2a1730; }
.link.dark .tip { fill: #70767f; }
.actions { display: flex; gap: 10px; }
.actions span { width: 40px; height: 40px; border-radius: 4px; display: flex; align-items: center; justify-content: center; }
.chat { border: 1px solid #bbbdc2; }
.chat svg { width: 23px; height: 22px; stroke: #70767f; stroke-width: 1.4; }
.burger { background: linear-gradient(100deg, #27b568, #2bc253); flex-direction: column; gap: 6px; }
.burger i { width: 18px; height: 2px; background: #fff; }
```
